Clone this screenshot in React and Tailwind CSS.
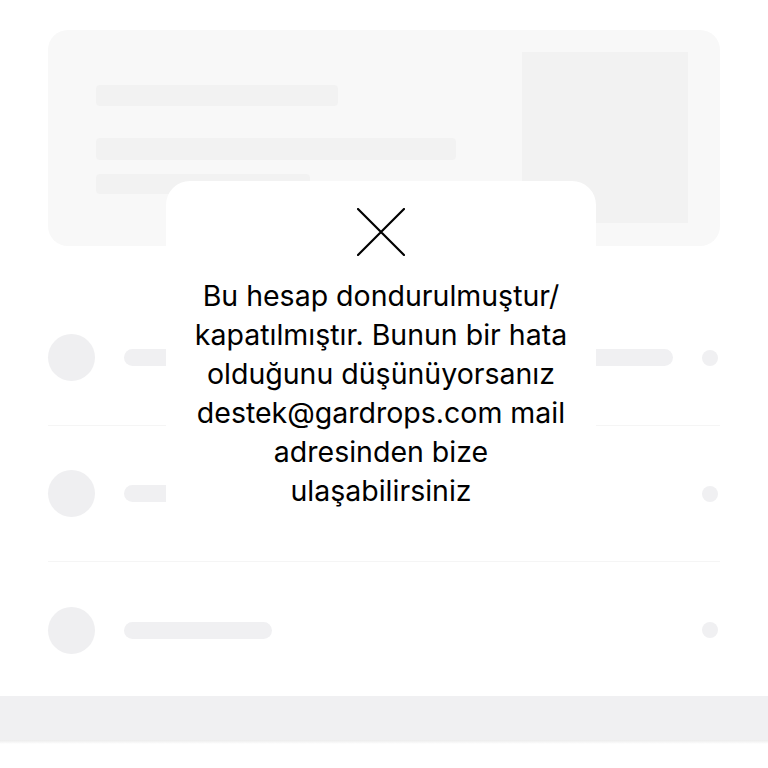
export default function App() {
  const rows = [
    { bar: "w-[549px]" },
    { bar: "w-[300px]" },
    { bar: "w-[148px]" },
  ];
  return (
    <div className="relative w-[768px] h-[768px] overflow-hidden bg-white" style={{ fontFamily: 'Inter, "Noto Sans", sans-serif' }}>
      <div className="pt-[30px] px-[48px]">
        <div className="flex h-[216px] rounded-[20px] bg-[#f8f8f8] pl-[48px] pr-[32px] pt-[22px]">
          <div className="flex flex-1 flex-col pt-[33px]">
            <div className="h-[21px] w-[242px] rounded-[4px] bg-[#f2f2f2]" />
            <div className="mt-[32px] h-[22px] w-[360px] rounded-[4px] bg-[#f2f2f2]" />
            <div className="mt-[14px] h-[20px] w-[214px] rounded-[4px] bg-[#f2f2f2]" />
          </div>
          <div className="h-[171px] w-[166px] bg-[#f2f2f2]" />
        </div>
        <div className="mt-[44px] flex flex-col">
          {rows.map((r, i) => (
            <div key={i} className={`flex h-[136px] items-center ${i < 2 ? "border-b border-[#f5f5f5]" : ""}`}>
              <div className="h-[47px] w-[47px] rounded-full bg-[#efeff1]" />
              <div className={`ml-[29px] h-[17px] rounded-full bg-[#f0f0f2] ${r.bar}`} />
              <div className="ml-auto mr-[2px] h-[16px] w-[16px] rounded-full bg-[#f0f0f2]" />
            </div>
          ))}
        </div>
      </div>
      <div className="mt-[-2px] h-[44px] w-full bg-[#f0f0f2]" />
      <div className="h-[4px] w-full bg-gradient-to-b from-[#ececec] to-white" />

      <div className="absolute left-[166px] top-[181px] flex h-[360px] w-[430px] flex-col items-center rounded-[24px] bg-white pt-[27px]">
        <svg width="48" height="48" viewBox="0 0 48 48" fill="none">
          <path d="M1 1L47 47M47 1L1 47" stroke="#000" strokeWidth="2.2" strokeLinecap="round" />
        </svg>
        <p className="mt-[20px] w-[378px] text-center text-[28.5px] leading-[39px] text-black">
          Bu hesap dondurulmuştur/ kapatılmıştır. Bunun bir hata olduğunu düşünüyorsanız destek@gardrops.com mail adresinden bize ulaşabilirsiniz
        </p>
      </div>
    </div>
  );
}
